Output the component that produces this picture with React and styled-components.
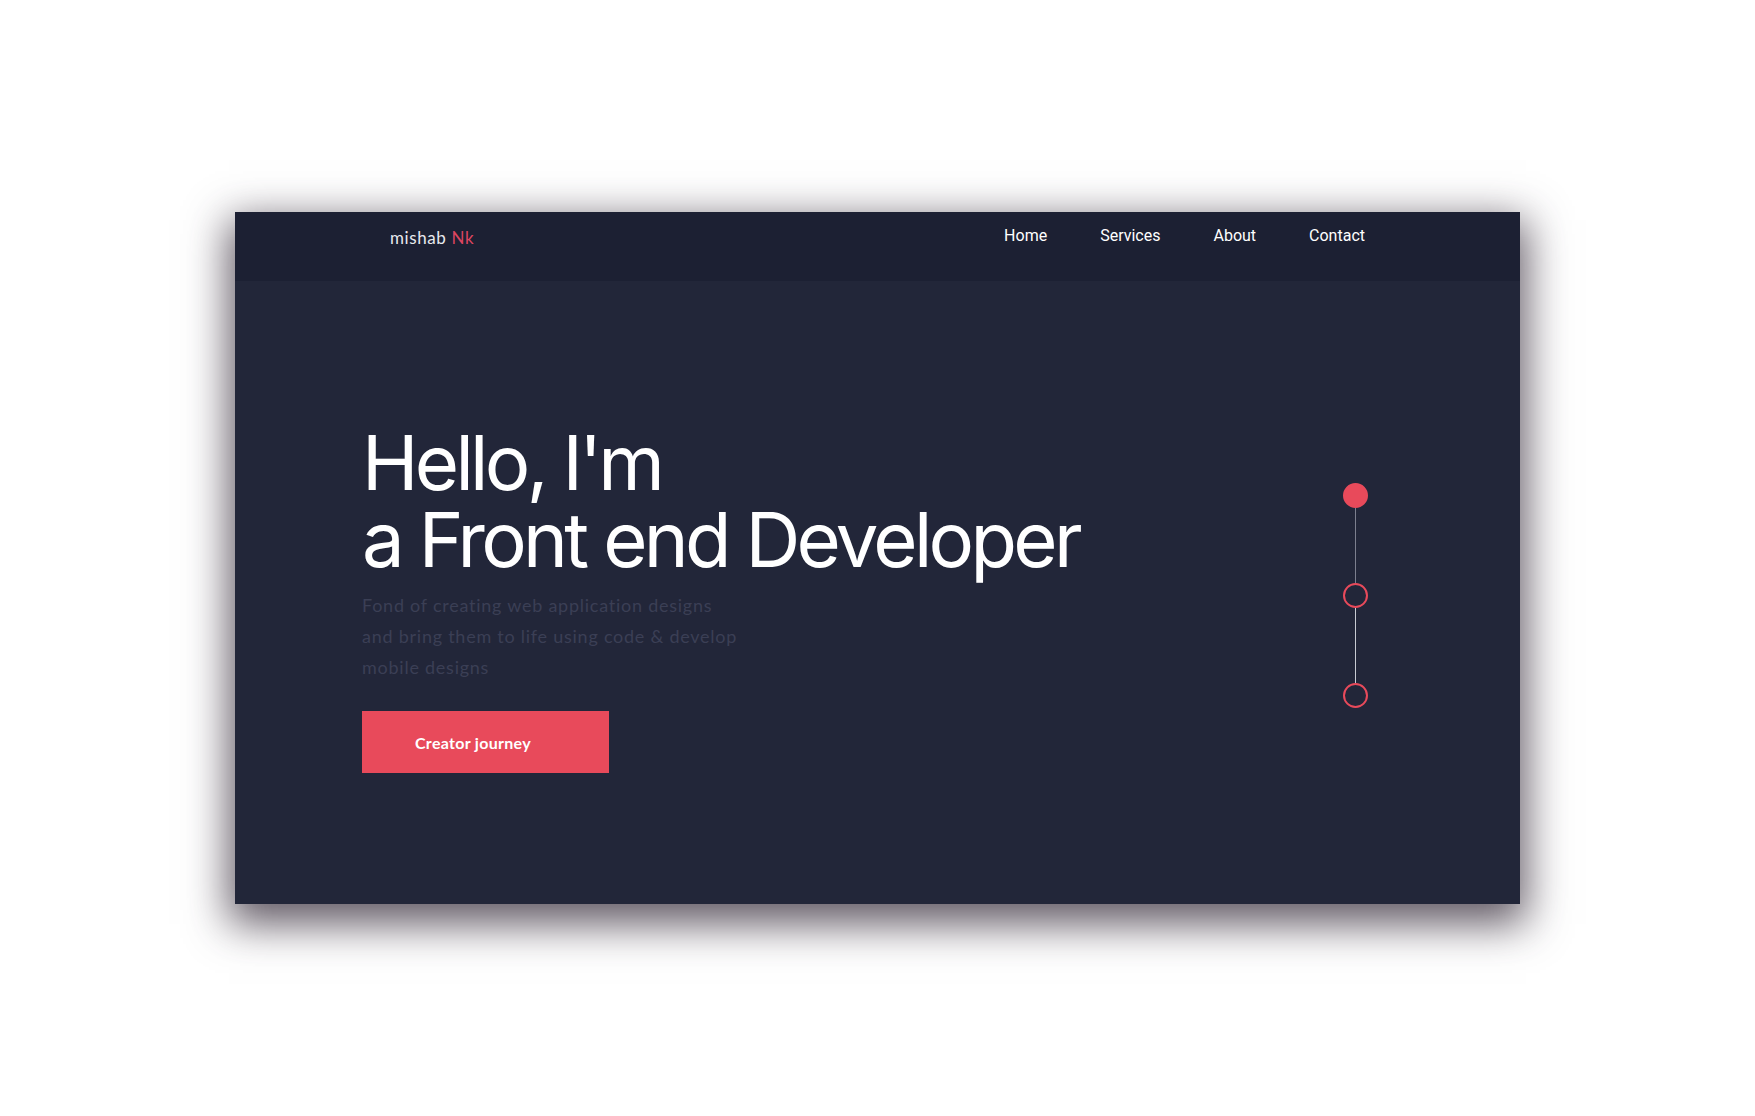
import styled, { createGlobalStyle } from 'styled-components'

const GlobalStyle = createGlobalStyle`
  * { box-sizing: border-box; }
  body {
    margin: 0;
    background: #ffffff;
    font-family: "Lato", "Noto Sans", sans-serif;
  }
`

const Page = styled.div`
  min-height: 100vh;
  display: flex;
  align-items: center;
  justify-content: center;
`

const Card = styled.section`
  width: 1285px;
  height: 692px;
  background: #222639;
  display: flex;
  flex-direction: column;
  box-shadow: 0 14px 40px 6px rgba(45, 35, 50, 0.75);
`

const Header = styled.header`
  height: 69px;
  flex-shrink: 0;
  background: #1c2033;
  display: flex;
  align-items: flex-start;
  justify-content: space-between;
  padding: 14px 155px 0 155px;
`

const Logo = styled.div`
  font-family: "Lato", sans-serif;
  font-size: 17px;
  line-height: 20px;
  margin-top: 2px;
  color: #e8e9ee;
  letter-spacing: 0.6px;

  span {
    color: #dc4560;
  }
`

const Nav = styled.nav`
  display: flex;
  gap: 53px;
`

const NavLink = styled.a`
  font-family: "Roboto", sans-serif;
  font-size: 16px;
  line-height: 20px;
  color: #ffffff;
  text-decoration: none;
`

const Hero = styled.main`
  flex: 1;
  display: flex;
  align-items: center;
  justify-content: space-between;
  padding: 12px 152px 0 127px;
`

const Intro = styled.div`
  display: flex;
  flex-direction: column;
  align-items: flex-start;
`

const Title = styled.h1`
  margin: 0;
  font-family: "Inter", sans-serif;
  font-weight: 400;
  font-size: 76px;
  line-height: 77px;
  letter-spacing: -3.7px;
  color: #ffffff;
`

const Text = styled.p`
  margin: 12px 0 0;
  font-family: "Lato", sans-serif;
  font-size: 18px;
  line-height: 31px;
  letter-spacing: 0.75px;
  color: #3b3f55;
`

const Button = styled.button`
  margin-top: 28px;
  width: 247px;
  height: 62px;
  border: none;
  background: #e84a5b;
  color: #ffffff;
  font-family: "Lato", sans-serif;
  font-weight: 700;
  font-size: 16px;
  letter-spacing: 0.3px;
  text-align: left;
  padding: 0 0 0 53px;
  cursor: pointer;
`

const Steps = styled.div`
  display: flex;
  flex-direction: column;
  align-items: center;
  margin-bottom: 7px;
`

const Dot = styled.span`
  width: 25px;
  height: 25px;
  border-radius: 50%;
  border: 2px solid #e84a5b;
  background: ${props => (props.$active ? '#e84a5b' : 'transparent')};
`

const Line = styled.span`
  width: 1px;
  height: 75px;
  background: ${props => props.$color};
`

function App() {
  return (
    <>
      <GlobalStyle />
      <Page>
        <Card>
          <Header>
            <Logo>mishab <span>Nk</span></Logo>
            <Nav>
              <NavLink href="#">Home</NavLink>
              <NavLink href="#">Services</NavLink>
              <NavLink href="#">About</NavLink>
              <NavLink href="#">Contact</NavLink>
            </Nav>
          </Header>
          <Hero>
            <Intro>
              <Title>
                Hello, I'm
                <br />
                a Front end Developer
              </Title>
              <Text>
                Fond of creating web application designs
                <br />
                and bring them to life using code &amp; develop
                <br />
                mobile designs
              </Text>
              <Button>Creator journey</Button>
            </Intro>
            <Steps>
              <Dot $active />
              <Line $color="#7c7f8e" />
              <Dot />
              <Line $color="#c8cad2" />
              <Dot />
            </Steps>
          </Hero>
        </Card>
      </Page>
    </>
  )
}

export default App
